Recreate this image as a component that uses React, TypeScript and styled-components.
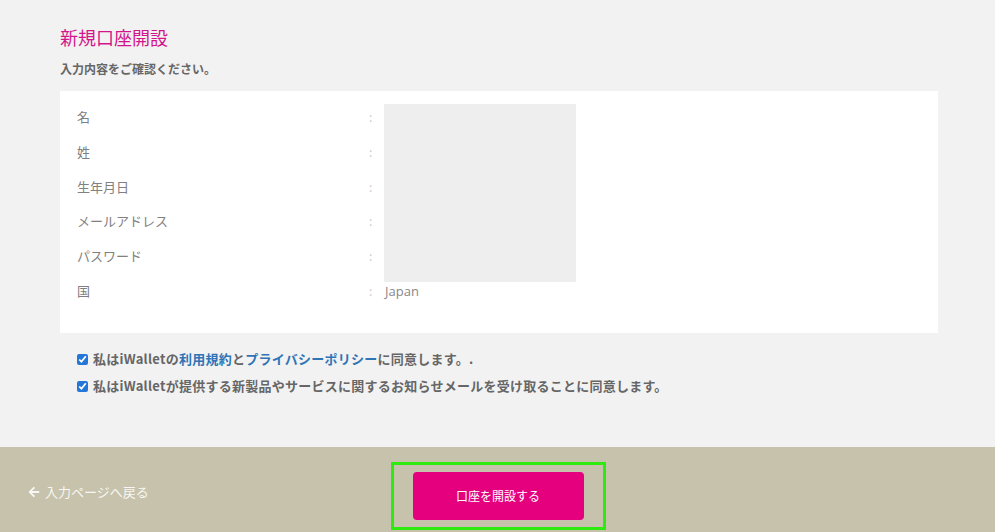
import styled, { createGlobalStyle } from "styled-components";
import { FaArrowLeft } from "react-icons/fa";

const GlobalStyle = createGlobalStyle`
  html, body {
    margin: 0;
    padding: 0;
    background: #f2f2f2;
  }
  body {
    font-family: "Noto Sans CJK JP", "Noto Sans", sans-serif;
  }
`;

const Page = styled.div`
  width: 995px;
  height: 532px;
  display: flex;
  flex-direction: column;
  overflow: hidden;
`;

const Main = styled.main`
  flex: 1;
  padding: 24px 57px 0 60px;
`;

const Title = styled.h1`
  margin: 0;
  font-size: 18px;
  font-weight: 400;
  line-height: 26px;
  color: #d3158b;
`;

const Lead = styled.p`
  margin: 11px 0 14px;
  font-size: 12px;
  font-weight: 700;
  line-height: 16px;
  color: #666;
`;

const Panel = styled.section`
  background: #fff;
  padding: 9px 17px 24px;
  height: 242px;
  box-sizing: border-box;
`;

const Grid = styled.div`
  display: grid;
  grid-template-columns: 292px 15px 1fr;
  grid-template-rows: repeat(6, 34.7px);
  align-items: center;
`;

const Label = styled.div`
  font-size: 13px;
  color: #808080;
  line-height: 18px;
`;

const Colon = styled.div`
  font-size: 12px;
  color: #ccc;
  line-height: 18px;
`;

const Value = styled.div`
  font-family: "Open Sans", "Noto Sans", sans-serif;
  font-size: 13px;
  color: #888;
  line-height: 18px;
  padding-left: 1px;
`;

const Masked = styled.div`
  grid-column: 3;
  grid-row: 1 / 6;
  align-self: start;
  margin-top: 4px;
  width: 192px;
  height: 178px;
  background: #eeeeee;
`;

const Agreements = styled.div`
  padding: 17px 0 0 17px;
  display: flex;
  flex-direction: column;
  gap: 9px;
`;

const Agree = styled.label`
  display: flex;
  align-items: center;
  gap: 5px;
  font-size: 13px;
  font-weight: 700;
  line-height: 18px;
  letter-spacing: 0.25px;
  color: #666;
`;

const Check = styled.input`
  width: 11px;
  height: 11px;
  margin: 0;
  accent-color: #2477d8;
`;

const Link = styled.a`
  color: #2f74b5;
  text-decoration: none;
`;

const Footer = styled.footer`
  height: 85px;
  flex-shrink: 0;
  background: #c6c2ab;
  display: grid;
  grid-template-columns: 1fr auto 1fr;
  align-items: start;
  padding-top: 15px;
  box-sizing: border-box;
`;

const Back = styled.a`
  justify-self: start;
  margin: 21px 0 0 28px;
  display: flex;
  align-items: center;
  gap: 5px;
  font-size: 13px;
  line-height: 17px;
  color: #f7f7f5;
  text-decoration: none;
`;

const Highlight = styled.div`
  border: 3px solid #2eea0e;
  padding: 7px 19px;
  margin-left: 1px;
`;

const Submit = styled.button`
  width: 171px;
  height: 48px;
  border: none;
  border-radius: 4px;
  background: #e5007e;
  color: #fff;
  font-family: "Noto Sans CJK JP", "Noto Sans", sans-serif;
  font-size: 12px;
  padding-top: 0;
  padding-bottom: 2px;
  cursor: pointer;
`;

const rows = ["名", "姓", "生年月日", "メールアドレス", "パスワード"];

export default function App() {
  return (
    <Page>
      <GlobalStyle />
      <Main>
        <Title>新規口座開設</Title>
        <Lead>入力内容をご確認ください。</Lead>
        <Panel>
          <Grid>
            {rows.map((r, i) => (
              <>
                <Label key={r} style={{ gridRow: i + 1, gridColumn: 1 }}>
                  {r}
                </Label>
                <Colon key={r + "c"} style={{ gridRow: i + 1, gridColumn: 2 }}>
                  :
                </Colon>
              </>
            ))}
            <Masked />
            <Label style={{ gridRow: 6, gridColumn: 1 }}>国</Label>
            <Colon style={{ gridRow: 6, gridColumn: 2 }}>:</Colon>
            <Value style={{ gridRow: 6, gridColumn: 3 }}>Japan</Value>
          </Grid>
        </Panel>
        <Agreements>
          <Agree>
            <Check type="checkbox" defaultChecked />
            <span>
              私はiWalletの<Link href="#">利用規約</Link>と
              <Link href="#">プライバシーポリシー</Link>に同意します。.
            </span>
          </Agree>
          <Agree>
            <Check type="checkbox" defaultChecked />
            <span>
              私はiWalletが提供する新製品やサービスに関するお知らせメールを受け取ることに同意します。
            </span>
          </Agree>
        </Agreements>
      </Main>
      <Footer>
        <Back href="#">
          <FaArrowLeft size={12} />
          入力ページへ戻る
        </Back>
        <Highlight>
          <Submit type="button">口座を開設する</Submit>
        </Highlight>
        <div />
      </Footer>
    </Page>
  );
}
